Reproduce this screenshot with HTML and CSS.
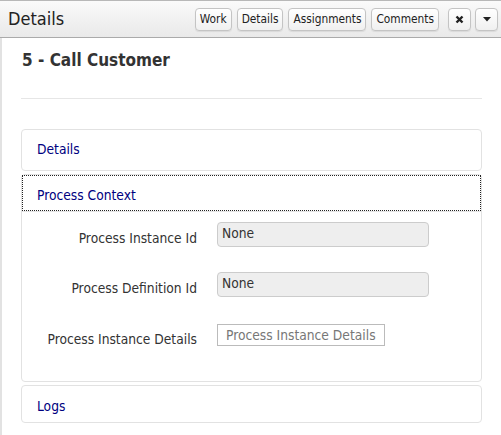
FILE: index.html
```html
<!DOCTYPE html>
<html>
<head>
<meta charset="utf-8">
<link rel="stylesheet" href="styles.css">
</head>
<body>
<div class="page">
  <div class="header">
    <div class="title">Details</div>
    <div class="actions">
      <button class="btn">Work</button>
      <button class="btn">Details</button>
      <button class="btn">Assignments</button>
      <button class="btn">Comments</button>
      <div class="icon-group">
        <button class="btn icon"><svg width="9" height="9" viewBox="0 0 9 9"><path d="M1.5 1.5 L7.5 7.5 M7.5 1.5 L1.5 7.5" stroke="#222" stroke-width="2.4" stroke-linecap="butt"/></svg></button>
        <button class="btn icon"><svg width="8" height="5" viewBox="0 0 8 5"><path d="M0 0 H8 L4 4.5 Z" fill="#222"/></svg></button>
      </div>
    </div>
  </div>
  <div class="content">
    <h1 class="task-title">5 - Call Customer</h1>
    <div class="rule"></div>
    <div class="panels">
      <div class="panel"><div class="panel-head">Details</div></div>
      <div class="panel">
        <div class="panel-head focused">Process Context</div>
        <div class="panel-body">
          <div class="row">
            <div class="label">Process Instance Id</div>
            <div class="field">None</div>
          </div>
          <div class="row">
            <div class="label">Process Definition Id</div>
            <div class="field">None</div>
          </div>
          <div class="row row-btn">
            <div class="label">Process Instance Details</div>
            <button class="plain-btn">Process Instance Details</button>
          </div>
        </div>
      </div>
      <div class="panel"><div class="panel-head short">Logs</div></div>
    </div>
  </div>
</div>
</body>
</html>
```
FILE: styles.css
```css
html, body {
  margin: 0;
  padding: 0;
  background: #fff;
}
body {
  font-family: "DejaVu Sans Condensed", "DejaVu Sans", sans-serif;
  color: #333;
}
.page {
  border-left: 2px solid #e2e2e2;
  min-height: 435px;
  box-sizing: border-box;
}
.header {
  height: 38px;
  box-sizing: border-box;
  border-top: 1px solid #b8b8b8;
  border-bottom: 1px solid #aaa;
  background: linear-gradient(#fafafa, #e9e9e9);
  display: flex;
  align-items: center;
  justify-content: space-between;
  margin-left: -2px;
  padding: 0 3px 0 8px;
}
.title {
  font-size: 18px;
  color: #222;
  margin-top: -2px;
}
.actions {
  display: flex;
  align-items: center;
  gap: 5px;
}
.btn {
  font-family: inherit;
  font-size: 11.8px;
  color: #222;
  height: 23px;
  padding: 0 4px;
  border: 1px solid #c4c4c4;
  border-radius: 4px;
  background: linear-gradient(#fff, #f0f0f0);
  box-shadow: 0 1px 1px rgba(0,0,0,0.08);
  display: flex;
  align-items: center;
  margin: 0;
}
.icon-group {
  display: flex;
  gap: 4px;
  margin-left: 4px;
}
.btn.icon {
  width: 23px;
  padding: 0;
  justify-content: center;
}
.content {
  padding: 0 19px 0 19px;
}
.task-title {
  margin: 0;
  padding-top: 12px;
  font-size: 17px;
  font-weight: bold;
  color: #333;
  height: 47px;
  box-sizing: border-box;
  padding-left: 1px;
}
.rule {
  border-top: 1px solid #e6e6e6;
  margin-top: 13px;
}
.panels {
  margin-top: 30px;
  display: flex;
  flex-direction: column;
  gap: 3px;
}
.panel {
  border: 1px solid #e2e2e2;
  border-radius: 4px;
}
.panel-head {
  height: 40px;
  box-sizing: border-box;
  padding: 11px 15px 0;
  font-size: 13.7px;
  color: #000080;
}
.panel-head.short {
  height: 36px;
  padding-top: 12px;
}
.panel-head.focused {
  height: 36px;
  padding-top: 12px;
  outline: 1px dotted #222;
  outline-offset: -1px;
}
.panel-body {
  border-top: 1px solid #e6e6e6;
  padding: 10px 0 32px 0;
  display: flex;
  flex-direction: column;
  gap: 25px;
}
.row {
  display: flex;
  align-items: center;
  gap: 20px;
  height: 25px;
}
.row-btn {
  margin-top: 2px;
  align-items: flex-start;
}
.label {
  width: 175px;
  text-align: right;
  font-size: 13.7px;
  color: #333;
  padding-top: 6px;
}
.row-btn .label { padding-top: 7px; }
.field {
  width: 212px;
  height: 25px;
  box-sizing: border-box;
  background: #eee;
  border: 1px solid #ccc;
  border-radius: 4px;
  font-size: 13.7px;
  color: #333;
  padding: 2px 4px;
}
.plain-btn {
  font-family: inherit;
  font-size: 13.7px;
  color: #777;
  background: #fff;
  border: 1px solid #bbb;
  height: 22px;
  padding: 0 8px;
  margin: 0;
}
```
